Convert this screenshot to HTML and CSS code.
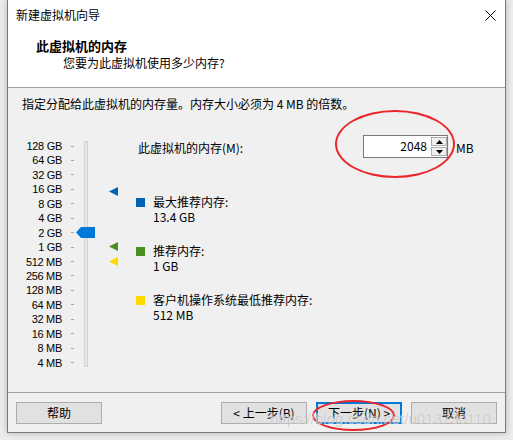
FILE: index.html
```html
<!DOCTYPE html>
<html lang="zh-CN">
<head>
<meta charset="utf-8">
<link rel="stylesheet" href="styles.css">
</head>
<body>
<div class="window">
  <div class="titlebar">
    <span class="title">新建虚拟机向导</span>
    <svg class="close" width="11" height="11" viewBox="0 0 11 11"><path d="M0.5 0.5L10.5 10.5M10.5 0.5L0.5 10.5" stroke="#000" stroke-width="1" fill="none"/></svg>
  </div>
  <div class="header">
    <div class="heading">此虚拟机的内存</div>
    <div class="subheading">您要为此虚拟机使用多少内存?</div>
  </div>
  <div class="content">
    <div class="intro">指定分配给此虚拟机的内存量。内存大小必须为 4 MB 的倍数。</div>
    <div class="main">
      <div class="slider">
        <div class="labels">
          <div class="lab"><span>128 GB</span><i></i></div>
          <div class="lab"><span>64 GB</span><i></i></div>
          <div class="lab"><span>32 GB</span><i></i></div>
          <div class="lab"><span>16 GB</span><i></i></div>
          <div class="lab"><span>8 GB</span><i></i></div>
          <div class="lab"><span>4 GB</span><i></i></div>
          <div class="lab"><span>2 GB</span><i></i></div>
          <div class="lab"><span>1 GB</span><i></i></div>
          <div class="lab"><span>512 MB</span><i></i></div>
          <div class="lab"><span>256 MB</span><i></i></div>
          <div class="lab"><span>128 MB</span><i></i></div>
          <div class="lab"><span>64 MB</span><i></i></div>
          <div class="lab"><span>32 MB</span><i></i></div>
          <div class="lab"><span>16 MB</span><i></i></div>
          <div class="lab"><span>8 MB</span><i></i></div>
          <div class="lab"><span>4 MB</span><i></i></div>
        </div>
        <div class="track"></div>
        <div class="thumb"></div>
        <div class="marker m-blue"></div>
        <div class="marker m-green"></div>
        <div class="marker m-yellow"></div>
      </div>
      <div class="right">
        <div class="row1">
          <span class="memlabel">此虚拟机的内存(M):</span>
          <div class="spinbox">
            <span class="value">2048</span>
            <div class="spin">
              <div class="sbtn"><svg width="7" height="4" viewBox="0 0 7 4"><path d="M0 4L3.5 0L7 4Z" fill="#000"/></svg></div>
              <div class="sbtn"><svg width="7" height="4" viewBox="0 0 7 4"><path d="M0 0L3.5 4L7 0Z" fill="#000"/></svg></div>
            </div>
          </div>
          <span class="unit">MB</span>
        </div>
        <div class="legend">
          <div class="item"><span class="sq sq-blue"></span><div><div>最大推荐内存:</div><div>13.4 GB</div></div></div>
          <div class="item"><span class="sq sq-green"></span><div><div>推荐内存:</div><div>1 GB</div></div></div>
          <div class="item"><span class="sq sq-yellow"></span><div><div>客户机操作系统最低推荐内存:</div><div>512 MB</div></div></div>
        </div>
      </div>
    </div>
  </div>
  <div class="footer">
    <button class="btn">帮助</button>
    <div class="spacer"></div>
    <button class="btn">&lt; 上一步(B)</button>
    <button class="btn btn-default">下一步(N) &gt;</button>
    <button class="btn">取消</button>
  </div>
</div>
<div class="ellipse ellipse-input"></div>
<div class="ellipse ellipse-next"></div>
<div class="watermark">https://blog.csdn.net/u013730110</div>
</body>
</html>
```
FILE: styles.css
```css
html, body {
  margin: 0;
  padding: 0;
}
body {
  width: 513px;
  height: 440px;
  background: #ececec;
  font-family: "Noto Sans CJK SC", "Liberation Sans", sans-serif;
  font-size: 12px;
  color: #000;
  position: relative;
  overflow: hidden;
}
.window {
  margin-left: 7px;
  width: 497px;
  height: 432px;
  border: 1px solid #7a7a7a;
  border-top: none;
  background: #f0f0f0;
  box-shadow: 0 0 6px rgba(0,0,0,0.25);
  display: flex;
  flex-direction: column;
}
.titlebar {
  height: 30px;
  background: #fff;
  display: flex;
  align-items: center;
  padding: 0 9px 0 8px;
}
.title {
  flex: 1;
  line-height: 16px;
}
.close {
  display: block;
}
.header {
  background: #fff;
  border-bottom: 1px solid #a0a0a0;
  padding: 8px 0 0 28px;
  box-sizing: border-box;
  height: 58px;
}
.heading {
  font-size: 13px;
  font-weight: bold;
  line-height: 16px;
}
.subheading {
  line-height: 17px;
  padding-left: 27px;
}
.content {
  box-sizing: border-box;
  padding-top: 8px;
  border-bottom: 1px solid #a0a0a0;
  height: 305px;
}
.intro {
  padding-left: 14px;
  line-height: 16px;
}
.main {
  display: flex;
  margin-top: 23px;
}
.slider {
  position: relative;
  width: 128px;
  height: 236px;
  flex: none;
}
.labels {
  padding-top: 3.8px;
  font-family: "Liberation Sans", sans-serif;
  font-size: 11px;
  letter-spacing: -0.3px;
}
.lab {
  display: flex;
  align-items: center;
  height: 14.45px;
}
.lab span {
  width: 54px;
  text-align: right;
}
.lab i {
  width: 3px;
  height: 1px;
  background: #a8a8a8;
  margin-left: 9px;
}
.track {
  position: absolute;
  left: 76px;
  top: 6px;
  width: 4px;
  height: 226px;
  box-sizing: border-box;
  background: #e7e7e7;
  border: 1px solid #d4d4d4;
}
.thumb {
  position: absolute;
  left: 68px;
  top: 92px;
  width: 19px;
  height: 11px;
  background: #0078d7;
  clip-path: polygon(0 50%, 5px 0, 100% 0, 100% 100%, 5px 100%);
}
.marker {
  position: absolute;
  left: 101px;
  width: 9px;
  height: 9px;
  clip-path: polygon(0 50%, 100% 0, 100% 100%);
}
.m-blue { top: 52px; background: #0063b1; }
.m-green { top: 107px; background: #4a8f1f; }
.m-yellow { top: 122px; background: #ffd800; }
.right {
  flex: 1;
}
.row1 {
  display: flex;
  align-items: center;
  height: 23px;
}
.memlabel {
  width: 225px;
  padding-left: 2px;
  padding-top: 3px;
  line-height: 16px;
}
.spinbox {
  display: flex;
  width: 85px;
  height: 23px;
  box-sizing: border-box;
  border: 1px solid #7a7a7a;
  background: #fff;
}
.value {
  width: 67px;
  text-align: right;
  padding-right: 4px;
  box-sizing: border-box;
  line-height: 20px;
}
.spin {
  display: flex;
  flex-direction: column;
  gap: 1px;
  padding: 1px 0;
  width: 16px;
}
.sbtn {
  flex: 1;
  border: 1px solid #adadad;
  background: #f0f0f0;
  display: flex;
  align-items: center;
  justify-content: center;
}
.sbtn svg { display: block; }
.unit {
  margin-left: 8px;
  padding-top: 3px;
  line-height: 16px;
}
.legend {
  margin-top: 37px;
  display: flex;
  flex-direction: column;
  gap: 20px;
  line-height: 14.5px;
}
.item {
  display: flex;
  align-items: flex-start;
}
.sq {
  width: 9px;
  height: 9px;
  margin-top: 3px;
  margin-right: 8px;
  flex: none;
}
.sq-blue { background: #0063b1; }
.sq-green { background: #4a8f1f; }
.sq-yellow { background: #ffd800; }
.footer {
  flex: 1;
  display: flex;
  align-items: flex-start;
  padding: 9px 8px 0 8px;
  gap: 9px;
}
.spacer { flex: 1; }
.btn {
  width: 86px;
  height: 22px;
  margin: 0;
  padding: 0;
  font-family: "Noto Sans CJK SC", "Liberation Sans", sans-serif;
  font-size: 12px;
  color: #000;
  background: #e1e1e1;
  border: 1px solid #adadad;
  line-height: 18px;
}
.btn-default {
  border-color: #0078d7;
  box-shadow: inset 0 0 0 1px #0078d7;
}
.ellipse {
  position: absolute;
  border: 2px solid #e8262c;
  border-radius: 50%;
  box-sizing: border-box;
}
.ellipse-input {
  left: 335px;
  top: 110px;
  width: 120px;
  height: 68px;
}
.ellipse-next {
  left: 312px;
  top: 400px;
  width: 83px;
  height: 31px;
}
.watermark {
  position: absolute;
  left: 270px;
  top: 410px;
  font-family: "Liberation Sans", sans-serif;
  font-size: 15px;
  color: rgba(170,170,170,0.55);
  text-shadow: 0 0 1px rgba(255,255,255,0.8);
  white-space: nowrap;
}
```
